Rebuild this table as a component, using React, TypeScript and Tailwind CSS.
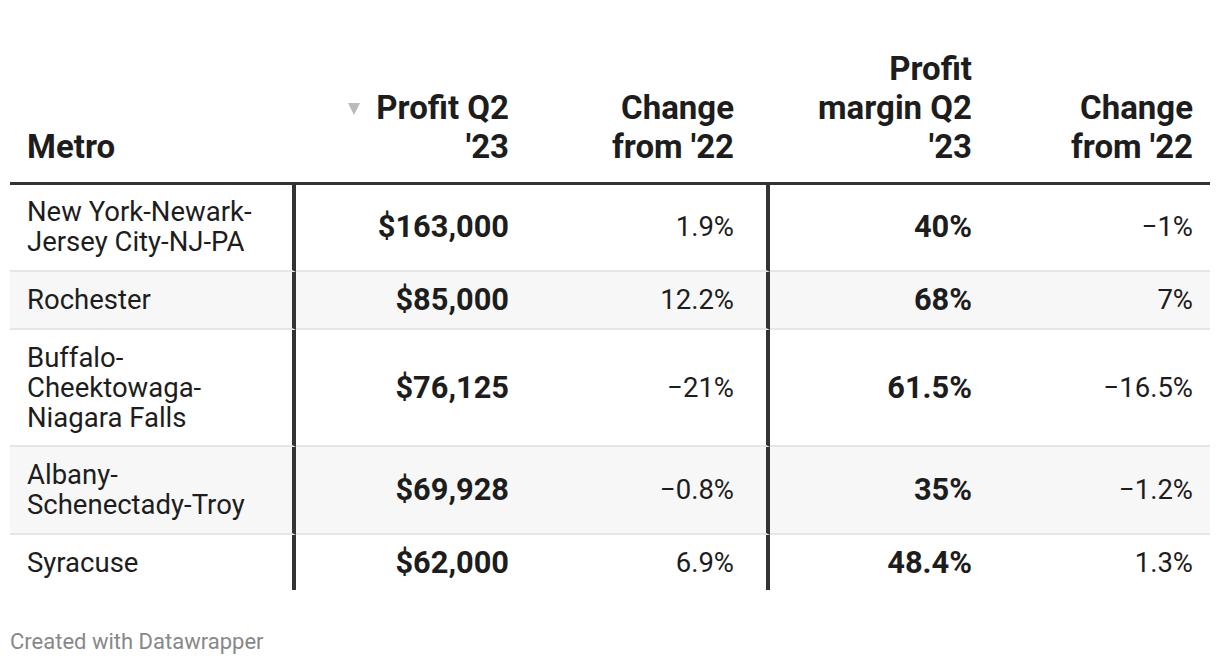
import React from "react";

type Row = {
  metro: React.ReactNode;
  profit: string;
  change1: string;
  margin: string;
  change2: string;
  shaded?: boolean;
};

const rows: Row[] = [
  { metro: <>New York-Newark-<br />Jersey City-NJ-PA</>, profit: "$163,000", change1: "1.9%", margin: "40%", change2: "\u22121%" },
  { metro: "Rochester", profit: "$85,000", change1: "12.2%", margin: "68%", change2: "7%", shaded: true },
  { metro: <>Buffalo-<br />Cheektowaga-<br />Niagara Falls</>, profit: "$76,125", change1: "\u221221%", margin: "61.5%", change2: "\u221216.5%" },
  { metro: <>Albany-<br />Schenectady-Troy</>, profit: "$69,928", change1: "\u22120.8%", margin: "35%", change2: "\u22121.2%", shaded: true },
  { metro: "Syracuse", profit: "$62,000", change1: "6.9%", margin: "48.4%", change2: "1.3%" },
];

export default function App() {
  return (
    <div className="w-[1220px] h-[666px] bg-white px-[10px] font-['Roboto',sans-serif] text-[#1d1d1d] flex flex-col">
      {/* Header */}
      <div className="grid grid-cols-[286px_230px_244px_219px_221px] items-end pt-[49px] border-b-[3px] border-b-[#333333] font-bold text-[33px] leading-[39px]">
        <div className="pl-[17px] pb-[16px]">Metro</div>
        <div className="pr-[17px] pb-[16px] text-right">
          <svg width="12" height="12" viewBox="0 0 12 12" className="inline-block relative -top-[1px] mr-[16px]">
            <path d="M0 0 L12 0 L6 12 Z" fill="#bbbbbb" />
          </svg>
          Profit Q2
          <br />'23
        </div>
        <div className="pr-[36px] pb-[16px] text-right">
          Change
          <br />from '22
        </div>
        <div className="pr-[17px] pb-[16px] text-right">
          Profit
          <br />margin Q2
          <br />'23
        </div>
        <div className="pr-[17px] pb-[16px] text-right">
          Change
          <br />from '22
        </div>
      </div>

      {/* Body */}
      {rows.map((r, i) => {
        const last = i === rows.length - 1;
        const bg = r.shaded ? "bg-[#f7f7f7]" : "bg-white";
        const bb = last ? "" : "border-b-2 border-b-[#e6e6e6]";
        const py = i === 0 ? "pt-[12px] pb-[13px]" : "pt-[13px] pb-[12.5px]";
        return (
          <div key={i} className={`grid grid-cols-[286px_230px_244px_219px_221px] ${bg}`}>
            <div className={`pl-[17px] ${py} flex items-center text-[27.5px] leading-[30px] border-r-4 border-r-[#333333] ${bb}`}>
              <span>{r.metro}</span>
            </div>
            <div className={`pr-[17px] ${py} flex items-center justify-end font-bold text-[30.8px] leading-[30px] ${bb}`}>
              {r.profit}
            </div>
            <div className={`pr-[32px] ${py} flex items-center justify-end text-[27.5px] leading-[30px] border-r-4 border-r-[#333333] ${bb}`}>
              {r.change1}
            </div>
            <div className={`pr-[17px] ${py} flex items-center justify-end font-bold text-[30.8px] leading-[30px] ${bb}`}>
              {r.margin}
            </div>
            <div className={`pr-[17px] ${py} flex items-center justify-end text-[27.5px] leading-[30px] ${bb}`}>
              {r.change2}
            </div>
          </div>
        );
      })}

      {/* Footer */}
      <div className="mt-[39px] text-[22px] leading-[26px] text-[#888888]">Created with Datawrapper</div>
    </div>
  );
}
